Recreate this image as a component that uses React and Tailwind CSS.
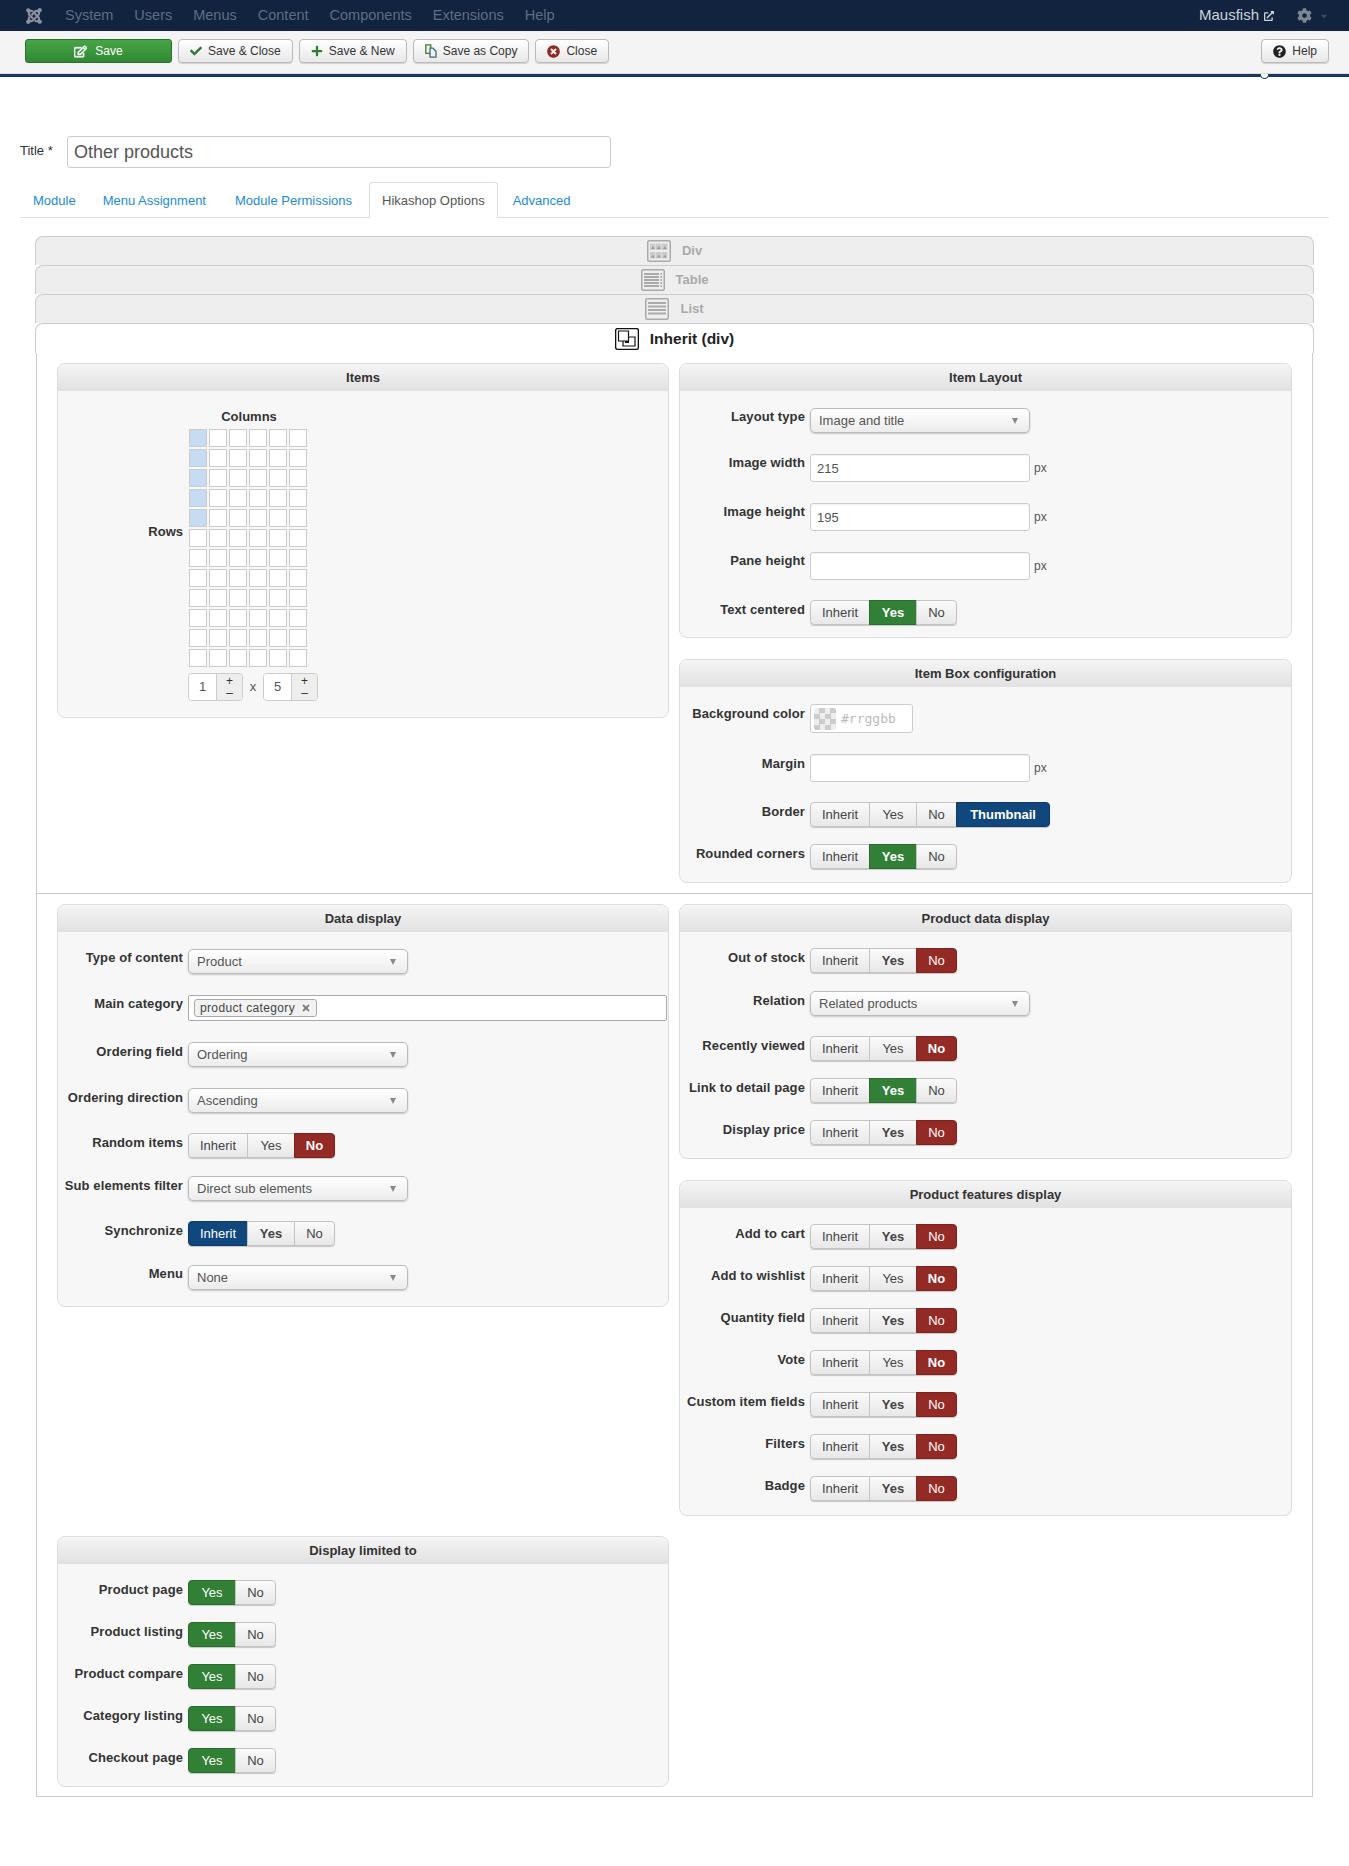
import React from "react";
import { FaJoomla, FaCheck, FaPlus, FaTimes, FaTimesCircle, FaQuestionCircle, FaCog, FaCaretDown, FaRegEdit, FaExternalLinkAlt } from "react-icons/fa";

const CopyIcon = () => (
  <svg width="12" height="14" viewBox="0 0 12 14" fill="none" stroke="#4a7a2c" strokeWidth="1.3">
    <path d="M0.8 0.8h5v8.5h-5z" fill="#f0f0f0" />
    <path d="M5 4.2h3l3 3v6h-6z" fill="#f0f0f0" stroke="#3a6f7a" />
  </svg>
);

const ToolButton = ({ icon, children, className = "" }) => (
  <button className={`h-[24px] px-[11px] flex items-center justify-center gap-[6px] text-[12px] text-[#333] bg-gradient-to-b from-white to-[#e8e8e8] border border-[#bbb] rounded-[4px] shadow-[0_1px_1px_rgba(0,0,0,0.15)] ${className}`}>
    {icon}
    <span>{children}</span>
  </button>
);

const toggleWidths = {
  Inherit: "w-[60px]",
  Yes: "w-[48px]",
  No: "w-[41px]",
  Thumbnail: "w-[94px]",
};

const Toggle = ({ options = ["Inherit", "Yes", "No"], active, tone = "green", bold }) => {
  const tones = {
    green: "bg-[#327f36] text-white border-[#2a6b2e]",
    red: "bg-[#942a25] text-white border-[#7e221e]",
    blue: "bg-[#10477c] text-white border-[#0d3a66]",
  };
  return (
    <div className="flex h-[25px] shadow-[0_1px_1px_rgba(0,0,0,0.2)] rounded-[4px]">
      {options.map((opt, i) => {
        const isActive = opt === active;
        const round = i === 0 ? "rounded-l-[4px]" : i === options.length - 1 ? "rounded-r-[4px]" : "";
        return (
          <div
            key={opt}
            className={`flex items-center justify-center text-[13px] border ${toggleWidths[opt]} ${i > 0 ? "-ml-px" : ""} ${round} ${
              isActive ? tones[tone] : "bg-gradient-to-b from-[#fafafa] to-[#e8e8e8] border-[#c4c4c4] text-[#444]"
            } ${opt === bold ? "font-bold" : ""} ${!isActive && opt === bold ? "from-[#e6e6e6] to-[#e6e6e6]" : ""}`}
          >
            {opt}
          </div>
        );
      })}
    </div>
  );
};

const Select = ({ value }) => (
  <div className="w-[220px] h-[25px] flex items-center justify-between pl-2 pr-[11px] text-[13px] text-[#555] bg-gradient-to-b from-white to-[#ececec] border border-[#bbb] rounded-[5px] shadow-[0_1px_2px_rgba(0,0,0,0.2)]">
    <span>{value}</span>
    <span className="w-0 h-0 border-x-[3.5px] border-x-transparent border-t-[6px] border-t-[#888]" />
  </div>
);

const TextInput = ({ value = "" }) => (
  <div className="flex items-center gap-[4px]">
    <input readOnly value={value} className="w-[220px] h-[28px] px-[6px] text-[13px] text-[#555] bg-white border border-[#ccc] rounded-[3px] shadow-[inset_0_1px_1px_rgba(0,0,0,0.05)]" />
    <span className="text-[12px] text-[#555]">px</span>
  </div>
);

const Row = ({ label, mt = "", tight = false, children }) => (
  <div className={`flex items-start gap-[5px] ${mt}`}>
    <div className={`w-[125px] shrink-0 text-right text-[13px] tracking-[0.1px] leading-[18px] font-bold text-[#333] whitespace-nowrap ${tight ? "" : "pt-px"}`}>{label}</div>
    {children}
  </div>
);

const Panel = ({ title, className = "", children }) => (
  <div className={`border border-[#ddd] rounded-[8px] bg-[#f7f7f7] overflow-hidden ${className}`}>
    <div className="h-[27px] flex items-center justify-center text-[13px] font-bold text-[#333] bg-gradient-to-b from-[#f5f5f5] to-[#e1e1e1]">
      {title}
    </div>
    {children}
  </div>
);

const Spinner = ({ value }) => (
  <div className="w-[55px] h-[28px] flex border border-[#ccc] rounded-[4px] overflow-hidden">
    <div className="w-[27px] flex items-center justify-center bg-white text-[13px] text-[#555]">{value}</div>
    <div className="flex-1 flex flex-col items-center justify-center bg-[#eee] border-l border-[#ccc] text-[12px] leading-[12px] text-[#333]">
      <span>+</span>
      <span>–</span>
    </div>
  </div>
);

const AccordionIcon = ({ kind }) => {
  if (kind === "div") {
    return (
      <svg width="24" height="22" viewBox="0 0 24 22">
        <rect x="0.75" y="0.75" width="22.5" height="20.5" rx="1.5" fill="#eee" stroke="#aaa" strokeWidth="1.5" />
        {[3, 9, 15].map((x) =>
          [3.5, 12].map((y) => (
            <g key={x + "-" + y}>
              <rect x={x} y={y} width="5.5" height="6.5" fill="#ccc" />
              <path d={`M${x + 1} ${y + 5.5}l2-3 1.5 3z`} fill="#999" />
            </g>
          ))
        )}
      </svg>
    );
  }
  const ys = kind === "table" ? [4, 7, 10, 13, 16] : [4, 7.5, 11, 14.5];
  return (
    <svg width="24" height="22" viewBox="0 0 24 22">
      <rect x="0.75" y="0.75" width="22.5" height="20.5" rx="1.5" fill="#eee" stroke="#aaa" strokeWidth="1.5" />
      {ys.map((y) => (
        <rect key={y} x="3" y={y} width={kind === "table" ? 15 : 18} height="2" fill="#aaa" />
      ))}
      {kind === "table" && ys.map((y) => <rect key={y} x="19.5" y={y} width="1.5" height="2" fill="#aaa" />)}
    </svg>
  );
};

const AccordionHead = ({ kind, label }) => (
  <div className="h-[29px] flex items-center justify-center gap-[11px] bg-[#eee] border-t border-x border-[#ccc] rounded-t-[8px] text-[13px] font-bold text-[#aaa]">
    <AccordionIcon kind={kind} />
    <span>{label}</span>
  </div>
);

const ColumnsGrid = () => (
  <div className="grid grid-cols-[repeat(6,18px)] gap-[2px] mt-[3px]">
    {Array.from({ length: 72 }).map((_, i) => (
      <div key={i} className={`h-[18px] border border-[#ccc] ${i % 6 === 0 && i < 30 ? "bg-[#c6dcf3]" : "bg-white"}`} />
    ))}
  </div>
);

const nav = ["System", "Users", "Menus", "Content", "Components", "Extensions", "Help"];
const features = [
  ["Add to cart", "Yes", "No"],
  ["Add to wishlist", "No", "No"],
  ["Quantity field", "Yes", "No"],
  ["Vote", "No", "No"],
  ["Custom item fields", "Yes", "No"],
  ["Filters", "Yes", "No"],
  ["Badge", "Yes", "No"],
];
const limited = ["Product page", "Product listing", "Product compare", "Category listing", "Checkout page"];

export default function App() {
  return (
    <div className="relative min-h-[1866px] bg-white font-['Liberation_Sans',Arial,sans-serif] text-[#333]">
      <div className="h-[31px] bg-[#12233f] flex items-center pl-[25px] pr-[20px]">
        <FaJoomla className="text-[#8a929e] text-[18px]" />
        <div className="flex gap-[21px] ml-[22px] text-[14.5px] text-[#5f6d82]">
          {nav.map((n) => (
            <span key={n}>{n}</span>
          ))}
        </div>
        <div className="ml-auto flex items-center text-[15px] text-[#ccd3dc]">
          <span>Mausfish</span>
          <FaExternalLinkAlt className="ml-[5px] text-[10px]" />
          <FaCog className="ml-[23px] text-[15px] text-[#7d8794]" />
          <FaCaretDown className="ml-[7px] text-[10px] text-[#3c4a60]" />
        </div>
      </div>

      <div className="h-[43px] bg-[#f4f4f4] border-b border-[#ddd] flex items-start pt-[8px] pl-[25px] pr-[20px] gap-[6px]">
        <button className="w-[147px] h-[24px] flex items-center justify-center gap-[8px] text-[12px] text-white bg-gradient-to-b from-[#46a546] to-[#2f8a33] border border-[#2c6e30] rounded-[3px]">
          <FaRegEdit className="text-[13px]" stroke="currentColor" strokeWidth={25} />
          <span>Save</span>
        </button>
        <ToolButton icon={<FaCheck className="text-[12px] text-[#2f7d32]" />}>Save &amp; Close</ToolButton>
        <ToolButton icon={<FaPlus className="text-[12px] text-[#2f7d32]" />}>Save &amp; New</ToolButton>
        <ToolButton icon={<CopyIcon />}>Save as Copy</ToolButton>
        <ToolButton icon={<FaTimesCircle className="text-[13px] text-[#942a25]" />}>Close</ToolButton>
        <ToolButton className="ml-auto" icon={<FaQuestionCircle className="text-[13px] text-[#222]" />}>Help</ToolButton>
      </div>
      <div className="h-[3px] bg-[#1a3867]" />
      {/* little notch under the toolbar line */}
      <div className="absolute left-[1260px] top-[74px] w-[9px] h-[5px] bg-white border-x border-b border-[#1a3867] rounded-b-full" />

      <div className="px-5">
        <div className="flex items-start mt-[59px]">
          <label className="w-[47px] text-[13px] text-[#333] leading-[30px]">Title *</label>
          <input readOnly value="Other products" className="w-[544px] h-[32px] px-[6px] text-[18px] text-[#555] border border-[#ccc] rounded-[3px]" />
        </div>

        <div className="flex mt-[14px] h-[36px] border-b border-[#ddd] text-[13px] text-[#1a8cd8]">
          <span className="pl-[13px] pr-[12px] mr-[2px] leading-[37px]">Module</span>
          <span className="px-[13px] mr-[3px] leading-[37px]">Menu Assignment</span>
          <span className="pl-[13px] pr-[13px] mr-[4px] leading-[37px]">Module Permissions</span>
          <span className="pl-[12px] pr-[12px] mr-[2px] leading-[35px] h-[36px] bg-white text-[#555] border border-b-0 border-[#ddd] rounded-t-[4px]">Hikashop Options</span>
          <span className="px-[13px] leading-[37px]">Advanced</span>
        </div>

        <div className="ml-[15px] w-[1279px] mt-[18px]">
          <AccordionHead kind="div" label="Div" />
          <AccordionHead kind="table" label="Table" />
          <AccordionHead kind="list" label="List" />
          <div className="h-[30px] flex items-center justify-center gap-[11px] border-t border-x border-[#ccc] rounded-t-[8px] text-[15.5px] font-bold text-[#222]">
            <svg width="24" height="22" viewBox="0 0 24 22" fill="none" stroke="#111" strokeWidth="1.2">
              <rect x="0.6" y="0.6" width="22.8" height="20.8" rx="2" strokeWidth="1.4" />
              <path d="M3.5 3h10v10h-10z" />
              <path d="M8 13v5h12v-9h-6.5" />
              <path d="M10 14h3v-1" fill="#111" strokeWidth="2" />
            </svg>
            <span>Inherit (div)</span>
          </div>

          <div className="ml-px w-[1277px] border-x border-b border-[#ccc] pb-[9px]">
            <div className="grid grid-cols-[612px_613px] gap-x-[10px] items-start pl-[20px] pt-[10px]">
              <Panel title="Items">
                <div className="flex gap-[6px] pb-[16px]">
                  <div className="w-[125px] pt-[132px] text-right text-[13px] leading-[18px] font-bold">Rows</div>
                  <div>
                    <div className="w-[120px] mt-[17px] text-center text-[13px] leading-[18px] font-bold">Columns</div>
                    <ColumnsGrid />
                    <div className="flex items-center mt-[6px] -ml-px">
                      <Spinner value="1" />
                      <span className="w-[20px] text-center text-[13px] text-[#555]">x</span>
                      <Spinner value="5" />
                    </div>
                  </div>
                </div>
              </Panel>

              <div className="flex flex-col gap-[21px]">
                <Panel title="Item Layout">
                  <div className="pb-[12px]">
                    <Row tight label="Layout type" mt="mt-[17px]"><Select value="Image and title" /></Row>
                    <Row tight label="Image width" mt="mt-[21px]"><TextInput value="215" /></Row>
                    <Row tight label="Image height" mt="mt-[21px]"><TextInput value="195" /></Row>
                    <Row tight label="Pane height" mt="mt-[21px]"><TextInput /></Row>
                    <Row label="Text centered" mt="mt-[20px]"><Toggle active="Yes" bold="Yes" /></Row>
                  </div>
                </Panel>
                <Panel title="Item Box configuration">
                  <div className="pb-[13px]">
                    <Row label="Background color" mt="mt-[17px]">
                      <div className="w-[103px] h-[29px] flex items-center gap-[5px] pl-[3px] bg-white border border-[#ccc] rounded-[3px]">
                        <div className="w-[22px] h-[22px] rounded-[2px] bg-[conic-gradient(#ccc_25%,#eee_0_50%,#ccc_0_75%,#eee_0)] bg-[length:11px_11px]" />
                        <span className="font-['DejaVu_Sans_Mono',monospace] text-[13px] text-[#bbb]">#rrggbb</span>
                      </div>
                    </Row>
                    <Row label="Margin" mt="mt-[21px]"><TextInput /></Row>
                    <Row label="Border" mt="mt-[20px]">
                      <Toggle options={["Inherit", "Yes", "No", "Thumbnail"]} active="Thumbnail" tone="blue" bold="Thumbnail" />
                    </Row>
                    <Row label="Rounded corners" mt="mt-[17px]"><Toggle active="Yes" bold="Yes" /></Row>
                  </div>
                </Panel>
              </div>
            </div>

            <div className="h-px bg-[#ccc] mt-[10px]" />

            <div className="grid grid-cols-[612px_613px] gap-x-[10px] items-start pl-[20px] pt-[10px]">
              <Panel title="Data display">
                <div className="pb-[16px]">
                  <Row tight label="Type of content" mt="mt-[17px]"><Select value="Product" /></Row>
                  <Row tight label="Main category" mt="mt-[21px]">
                    <div className="w-[479px] h-[26px] flex items-center pl-[5px] bg-white border border-[#aaa] rounded-[2px]">
                      <div className="h-[18px] flex items-center gap-[6px] px-[5px] bg-[#f2f2f2] border border-[#aaa] rounded-[3px] text-[12px] tracking-[0.35px] text-[#444]">
                        <span>product category</span>
                        <FaTimes className="text-[10px] text-[#777]" />
                      </div>
                    </div>
                  </Row>
                  <Row label="Ordering field" mt="mt-[21px]"><Select value="Ordering" /></Row>
                  <Row label="Ordering direction" mt="mt-[21px]"><Select value="Ascending" /></Row>
                  <Row label="Random items" mt="mt-[20px]"><Toggle active="No" tone="red" bold="No" /></Row>
                  <Row label="Sub elements filter" mt="mt-[18px]"><Select value="Direct sub elements" /></Row>
                  <Row label="Synchronize" mt="mt-[20px]"><Toggle active="Inherit" tone="blue" bold="Yes" /></Row>
                  <Row tight label="Menu" mt="mt-[19px]"><Select value="None" /></Row>
                </div>
              </Panel>

              <div className="flex flex-col gap-[21px]">
                <Panel title="Product data display">
                  <div className="pb-[13px]">
                    <Row label="Out of stock" mt="mt-[16px]"><Toggle active="No" tone="red" bold="Yes" /></Row>
                    <Row label="Relation" mt="mt-[18px]"><Select value="Related products" /></Row>
                    <Row label="Recently viewed" mt="mt-[20px]"><Toggle active="No" tone="red" bold="No" /></Row>
                    <Row label="Link to detail page" mt="mt-[17px]"><Toggle active="Yes" bold="Yes" /></Row>
                    <Row label="Display price" mt="mt-[17px]"><Toggle active="No" tone="red" bold="Yes" /></Row>
                  </div>
                </Panel>
                <Panel title="Product features display">
                  <div className="pt-[16px] pb-[14px] flex flex-col gap-[17px]">
                    {features.map(([label, bold, active]) => (
                      <Row key={label} label={label}><Toggle active={active} tone="red" bold={bold} /></Row>
                    ))}
                  </div>
                </Panel>
              </div>
            </div>

            <div className="pl-[20px] pt-[20px]">
              <Panel title="Display limited to" className="w-[612px]">
                <div className="pt-[16px] pb-[13px] flex flex-col gap-[17px]">
                  {limited.map((label) => (
                    <Row key={label} label={label}><Toggle options={["Yes", "No"]} active="Yes" /></Row>
                  ))}
                </div>
              </Panel>
            </div>
          </div>
        </div>
      </div>
    </div>
  );
}
